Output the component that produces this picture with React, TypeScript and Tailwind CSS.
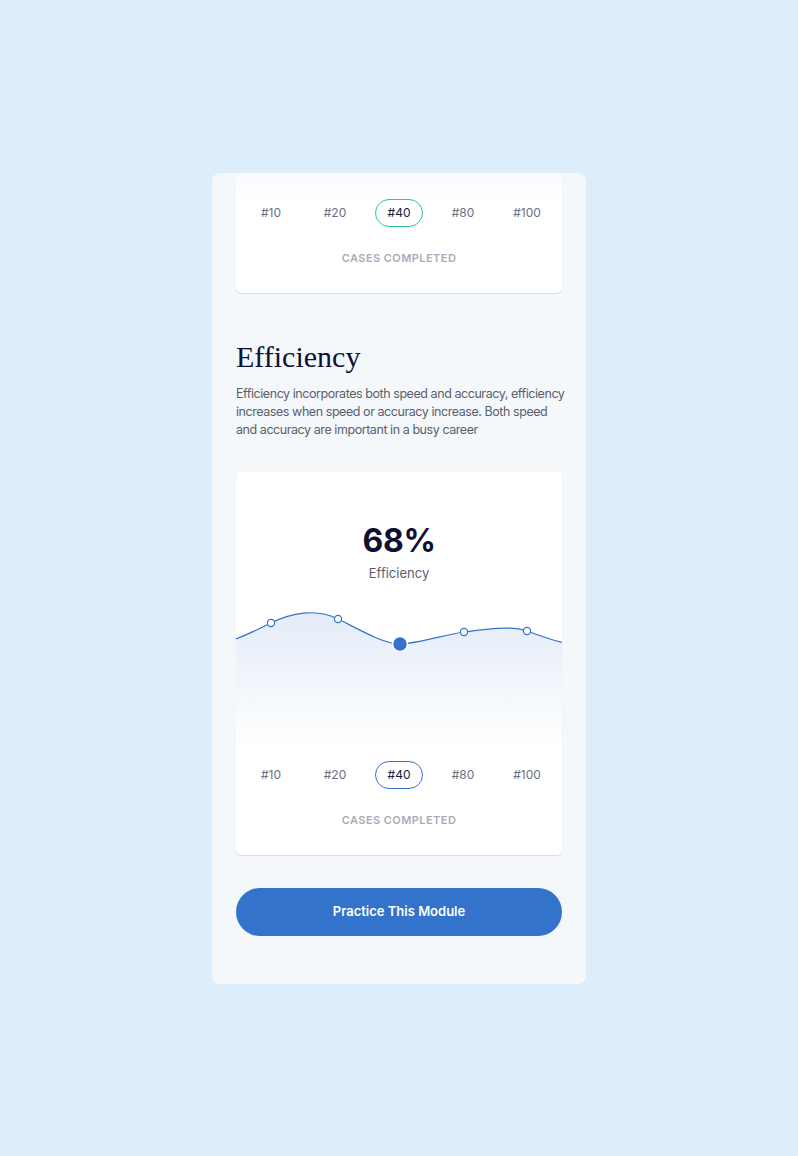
import React from 'react'

const labels = ['#10', '#20', '#40', '#80', '#100']

const linePath =
  'M0 39 C10 35, 21 30, 35 23 C55 13, 80 8, 102 19 C124 30, 148 44, 164 44 C180 44, 212 34, 228 32 C244 30, 275 25, 291 31 C307 37, 320 41, 328 43'

const dots = [
  [35, 23],
  [102, 19],
  [228, 32],
  [291, 31],
]

function Chart({color}: {color: string}) {
  return (
    <svg width="328" height="150" viewBox="0 0 328 150" className="block">
      <defs>
        <linearGradient id="fade" x1="0" y1="0" x2="0" y2="1">
          <stop offset="0" stopColor="#e4ecf8" />
          <stop offset="1" stopColor="#ffffff" />
        </linearGradient>
      </defs>
      <path d={`${linePath} L328 150 L0 150 Z`} fill="url(#fade)" />
      <path d={linePath} fill="none" stroke={color} strokeWidth="1.2" />
      {dots.map(([x, y]) => (
        <circle key={x} cx={x} cy={y} r="3.6" fill="#ffffff" stroke={color} strokeWidth="1.2" />
      ))}
      <circle cx="164" cy="44" r="7.5" fill={color} stroke="#ffffff" strokeWidth="1.5" />
    </svg>
  )
}

function CaseLabels({pill}: {pill: string}) {
  return (
    <>
      <div className="flex justify-center">
        {labels.map((l) => (
          <div key={l} className="flex w-16 justify-center">
            {l === '#40' ? (
              <span
                className={`flex h-7 w-12 items-center justify-center rounded-full border text-[12px] text-[#1a1c33] ${pill}`}
              >
                {l}
              </span>
            ) : (
              <span className="flex h-7 items-center text-[12px] text-[#6b6f7d]">{l}</span>
            )}
          </div>
        ))}
      </div>
      <div className="mt-[23px] text-center text-[11px] font-semibold uppercase leading-4 tracking-[0.04em] text-[#a9acb8]">
        Cases Completed
      </div>
    </>
  )
}

export default function App() {
  return (
    <div
      className="flex min-h-screen items-center justify-center bg-[#dcedfc]"
      style={{fontFamily: 'Inter, "Noto Sans", sans-serif'}}
    >
      <div className="h-[811px] w-[374px] overflow-hidden rounded-lg bg-[#f4f8fb] px-6 pb-[47px]">
        {/* previous card, scrolled past its top */}
        <div className="rounded-b-[5px] bg-white pb-[27px] shadow-[0_1px_1px_rgba(30,40,70,0.14)]">
          <div className="h-[26px] bg-gradient-to-b from-[#f8fafd] to-white" />
          <CaseLabels pill="border-[#2fc59a]" />
        </div>

        <h1
          className="mt-[46px] text-[30px] leading-9 text-[#0f1133]"
          style={{fontFamily: '"Liberation Serif", serif'}}
        >
          Efficiency
        </h1>
        <p className="mt-[10px] whitespace-nowrap text-[12.5px] leading-[18px] tracking-[-0.035em] text-[#5a5f6e]">
          Efficiency incorporates both speed and accuracy, efficiency
          <br />
          increases when speed or accuracy increase. Both speed
          <br />
          and accuracy are important in a busy career
        </p>

        <div className="mt-[33px] h-[383px] overflow-hidden rounded-[5px] bg-white pb-[27px] shadow-[0_1px_1px_rgba(30,40,70,0.14)]">
          <div className="pt-[49px] text-center text-[32px] font-bold leading-[40px] tracking-[-0.01em] text-[#0e1030]">
            68%
          </div>
          <div className="mt-[3px] text-center text-[13px] leading-[18px] text-[#5b5f6e]">Efficiency</div>
          <div className="mt-[18px] mb-[11px]">
            <Chart color="#3373cc" />
          </div>
          <CaseLabels pill="border-[#3373cc]" />
        </div>

        <button className="mt-[33px] h-12 w-full rounded-full bg-[#3373cc] text-[13px] font-semibold text-white">
          Practice This Module
        </button>
      </div>
    </div>
  )
}
